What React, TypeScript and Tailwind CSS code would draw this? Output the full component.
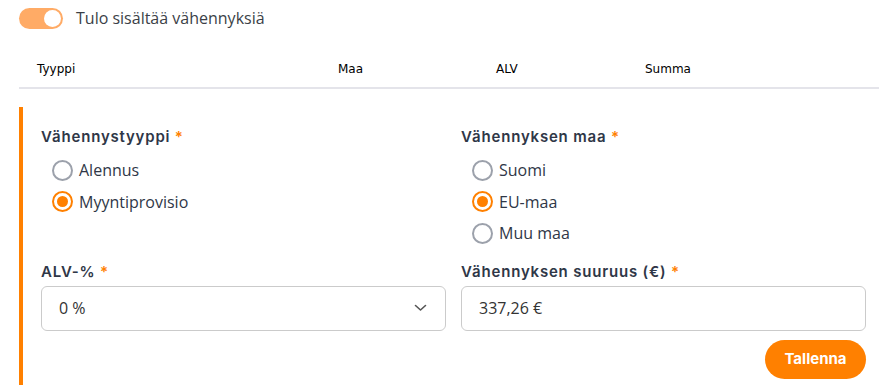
import React, { useState } from "react";

const body = "font-['Open_Sans',sans-serif]";
const heading = "font-['Inter',sans-serif] font-semibold text-[15px] tracking-[0.8px] text-[#2f3747]";

type RadioProps = { label: string; checked: boolean; onChange: () => void };

const Radio: React.FC<RadioProps> = ({ label, checked, onChange }) => (
  <label className="flex items-center gap-[6px] h-[31.5px] cursor-pointer" onClick={onChange}>
    {checked ? (
      <span className="w-[21px] h-[21px] rounded-full border-[2.5px] border-[#ff8000] flex items-center justify-center">
        <span className="w-[11px] h-[11px] rounded-full bg-[#ff8000]" />
      </span>
    ) : (
      <span className="w-[21px] h-[21px] rounded-full border-2 border-[#9ca1ab]" />
    )}
    <span className={`${body} text-[16px] text-[#2f3747]`}>{label}</span>
  </label>
);

export default function App() {
  const [enabled, setEnabled] = useState(true);
  const [tyyppi, setTyyppi] = useState("Myyntiprovisio");
  const [maa, setMaa] = useState("EU-maa");

  return (
    <div className="w-[879px] h-[385px] bg-white overflow-hidden pl-[19px]">
      {/* Toggle */}
      <div className="flex items-center gap-[13px] pt-[7px] h-[29px]">
        <button
          type="button"
          onClick={() => setEnabled(!enabled)}
          className={`w-[44px] h-[21px] rounded-full flex items-center px-[2px] ${enabled ? "bg-[#ffab66] justify-end" : "bg-gray-300 justify-start"}`}
        >
          <span className="w-[17px] h-[17px] rounded-full bg-white" />
        </button>
        <span className={`${body} text-[16px] text-[#3b3f47]`}>Tulo sisältää vähennyksiä</span>
      </div>

      {/* Table header */}
      <div className="mt-[31px] grid grid-cols-[301px_158px_149px_1fr] pl-[18px] pb-[9px] border-b-2 border-[#e4e4ea] font-['DejaVu_Sans',sans-serif] text-[12px] text-black">
        <span>Tyyppi</span>
        <span>Maa</span>
        <span>ALV</span>
        <span>Summa</span>
      </div>

      {/* Editor */}
      <div className="mt-[18px] border-l-4 border-[#ff8000] pl-[18px] pr-[13px] pt-[19px] pb-[6px]">
        <div className="grid grid-cols-2 gap-x-[15px]">
          <div>
            <div className={heading}>
              Vähennystyyppi <span className="text-[#ff8000]">*</span>
            </div>
            <div className="mt-[6px] pl-[11px]">
              {["Alennus", "Myyntiprovisio"].map((o) => (
                <Radio key={o} label={o} checked={tyyppi === o} onChange={() => setTyyppi(o)} />
              ))}
            </div>
          </div>
          <div>
            <div className={heading}>
              Vähennyksen maa <span className="text-[#ff8000]">*</span>
            </div>
            <div className="mt-[6px] pl-[11px]">
              {["Suomi", "EU-maa", "Muu maa"].map((o) => (
                <Radio key={o} label={o} checked={maa === o} onChange={() => setMaa(o)} />
              ))}
            </div>
          </div>

          <div className="mt-[12px]">
            <div className={heading}>
              ALV-% <span className="text-[#ff8000]">*</span>
            </div>
            <div className="mt-[2px] h-[45px] rounded-[6px] border border-[#cbcbcb] flex items-center justify-between pl-[17px] pr-[18px]">
              <span className={`${body} text-[16px] text-[#333]`}>0 %</span>
              <svg width="13" height="8" viewBox="0 0 13 8" fill="none">
                <path d="M1.5 1.5L6.5 6L11.5 1.5" stroke="#555" strokeWidth="1.6" strokeLinecap="round" strokeLinejoin="round" />
              </svg>
            </div>
          </div>
          <div className="mt-[12px]">
            <div className={heading}>
              Vähennyksen suuruus (€) <span className="text-[#ff8000]">*</span>
            </div>
            <div className="mt-[2px] h-[45px] rounded-[6px] border border-[#cbcbcb] flex items-center pl-[17px]">
              <span className={`${body} text-[16px] text-[#333]`}>337,26 €</span>
            </div>
          </div>
        </div>

        <div className="flex justify-end mt-[9px]">
          <button
            type="button"
            className="h-[39px] w-[101px] rounded-full bg-[#ff8000] text-white font-['Inter',sans-serif] font-bold text-[15px]"
          >
            Tallenna
          </button>
        </div>
      </div>
    </div>
  );
}
